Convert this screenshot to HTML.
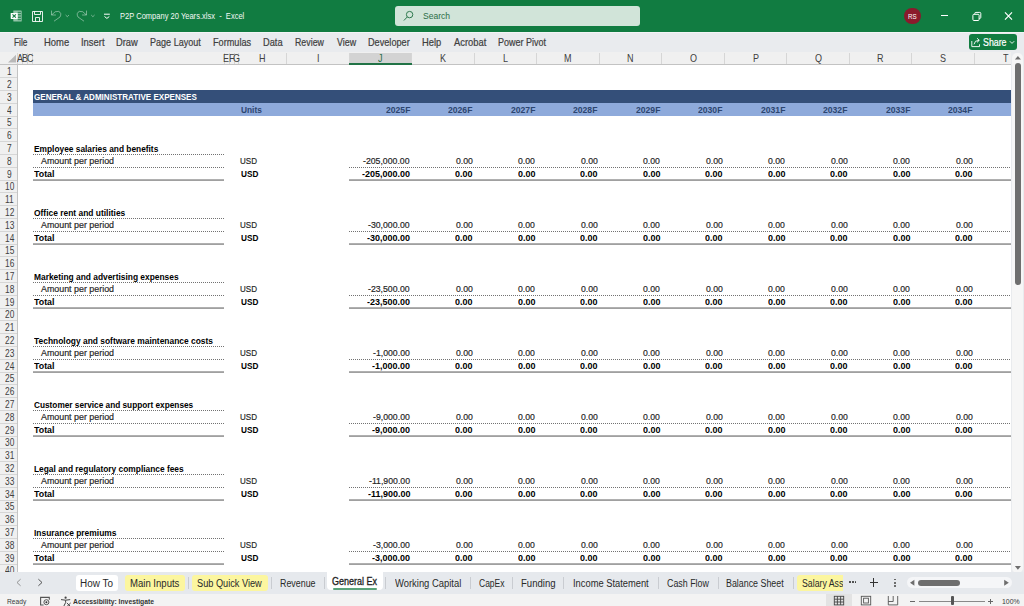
<!DOCTYPE html><html><head><meta charset="utf-8"><style>
html,body{margin:0;padding:0;width:1024px;height:606px;overflow:hidden;background:#fff;position:relative}
div,span,svg{position:absolute}
.t{white-space:nowrap;font-family:"Liberation Sans",sans-serif;transform-origin:0 0}
.k{-webkit-text-stroke:0.2px currentColor}
</style></head><body>
<div style="left:0.00px;top:0.00px;width:1024.00px;height:32.00px;background:#117c41"></div>
<svg style="left:10px;top:10px" width="13" height="13" viewBox="0 0 13 13">
<path d="M3.3 0.4 H11 Q11.7 0.4 11.7 1.1 V10.9 Q11.7 11.6 11 11.6 H4 Q3.3 11.6 3.3 10.9 Z" fill="rgba(255,255,255,0.55)"/>
<rect x="7.7" y="1.8" width="3.2" height="1.2" fill="#117c41" opacity="0.75"/>
<rect x="7.7" y="4.0" width="3.2" height="1.4" fill="#117c41" opacity="0.75"/>
<rect x="7.7" y="6.6" width="3.2" height="1.4" fill="#117c41" opacity="0.75"/>
<rect x="7.7" y="9.0" width="3.2" height="1.2" fill="#117c41" opacity="0.75"/>
<rect x="0.7" y="3" width="7" height="6" rx="0.4" fill="#fff"/>
<path d="M2.5 4.4 L5.9 7.6 M5.9 4.4 L2.5 7.6" stroke="#117c41" stroke-width="1.2"/>
</svg>
<svg style="left:31px;top:10px" width="14" height="13" viewBox="0 0 14 13" fill="none" stroke="rgba(255,255,255,0.88)" stroke-width="1">
<path d="M1.5 1.5 H11.5 V11.5 H1.5 Z"/>
<path d="M3.5 1.5 V4.5 H9.5 V1.5"/>
<path d="M4.5 11.5 V7.5 H8.5 V11.5"/>
</svg>
<svg style="left:50px;top:9px" width="48" height="14" viewBox="0 0 48 14" fill="none" stroke="rgba(255,255,255,0.42)" stroke-width="1">
<path d="M1.5 1.6 V6 H5.9"/><path d="M1.8 5.8 Q5.2 1.4 8.6 2.4 Q12.2 4 10 8 L4 12.2"/>
<path d="M15.6 6 L17.3 7.7 L19 6"/>
<path d="M36.5 1.6 V6 H32.1"/><path d="M36.2 5.8 Q32.8 1.4 29.4 2.4 Q25.8 4 28 8 L34 12.2"/>
<path d="M41.2 6 L42.9 7.7 L44.6 6"/>
</svg>
<svg style="left:103px;top:13px" width="8" height="7" viewBox="0 0 8 7" fill="none" stroke="#fff" stroke-width="1">
<path d="M1 1.2 H6.8"/><path d="M1.5 3.5 L3.9 5.4 L6.3 3.5"/>
</svg>
<span class="t" style="left:119.70px;top:11.00px;font-size:9.5px;line-height:9.5px;font-weight:normal;color:#f4f8f5;transform:scale(0.7934,1.000);white-space:pre">P2P Company 20 Years.xlsx  -  Excel</span>
<div style="left:395.20px;top:5.50px;width:245.00px;height:20.70px;background:#d1e4d9;border-radius:3px"></div>
<svg style="left:402px;top:10px" width="14" height="12" viewBox="0 0 14 12" fill="none" stroke="#2f7a4f" stroke-width="1">
<circle cx="7.6" cy="4.6" r="3.2"/><path d="M5.3 6.9 L1.9 10.5"/>
</svg>
<span class="t" style="left:422.52px;top:11.00px;font-size:9.5px;line-height:9.5px;font-weight:normal;color:#2b6e48;transform:scale(0.8993,1.000);">Search</span>
<div style="left:904.4px;top:8.1px;width:16.2px;height:16.2px;border-radius:50%;background:#8a1a2c"></div>
<span class="t" style="left:908.10px;top:13.00px;font-size:7px;line-height:7px;font-weight:normal;color:#fff;transform:scale(0.8844,1.000);">RS</span>
<div style="left:940.80px;top:15.00px;width:7.20px;height:1.00px;background:#fff"></div>
<svg style="left:970px;top:10px" width="14" height="13" viewBox="0 0 14 13" fill="none" stroke="#fff" stroke-width="1">
<rect x="2.9" y="4.3" width="6.2" height="6.2" rx="1"/><path d="M4.8 4.2 V3.4 Q4.8 2.4 5.8 2.4 H9.8 Q10.8 2.4 10.8 3.4 V7.4 Q10.8 8.4 9.8 8.4 H9.1"/>
</svg>
<svg style="left:1003px;top:10px" width="11" height="12" viewBox="0 0 11 12" fill="none" stroke="#fff" stroke-width="1.2">
<path d="M2 2.4 L9 9.6 M9 2.4 L2 9.6"/>
</svg>
<div style="left:0.00px;top:32.00px;width:1024.00px;height:20.00px;background:#e9ebee"></div>
<div style="left:0.00px;top:31.70px;width:1024.00px;height:1.30px;background:#f3f4f6"></div>
<span class="t k" style="left:14.24px;top:37.20px;font-size:9.75px;line-height:9.75px;font-weight:normal;color:#3f3f3f;transform:scale(0.8495,1.100);">File</span>
<span class="t k" style="left:44.24px;top:37.20px;font-size:9.75px;line-height:9.75px;font-weight:normal;color:#3f3f3f;transform:scale(0.9691,1.100);">Home</span>
<span class="t k" style="left:81.15px;top:37.20px;font-size:9.75px;line-height:9.75px;font-weight:normal;color:#3f3f3f;transform:scale(0.9638,1.100);">Insert</span>
<span class="t k" style="left:116.25px;top:37.20px;font-size:9.75px;line-height:9.75px;font-weight:normal;color:#3f3f3f;transform:scale(0.9551,1.100);">Draw</span>
<span class="t k" style="left:150.28px;top:37.20px;font-size:9.75px;line-height:9.75px;font-weight:normal;color:#3f3f3f;transform:scale(0.9273,1.100);">Page Layout</span>
<span class="t k" style="left:212.97px;top:37.20px;font-size:9.75px;line-height:9.75px;font-weight:normal;color:#3f3f3f;transform:scale(0.9384,1.100);">Formulas</span>
<span class="t k" style="left:262.86px;top:37.20px;font-size:9.75px;line-height:9.75px;font-weight:normal;color:#3f3f3f;transform:scale(0.9499,1.100);">Data</span>
<span class="t k" style="left:294.69px;top:37.20px;font-size:9.75px;line-height:9.75px;font-weight:normal;color:#3f3f3f;transform:scale(0.9038,1.100);">Review</span>
<span class="t k" style="left:336.86px;top:37.20px;font-size:9.75px;line-height:9.75px;font-weight:normal;color:#3f3f3f;transform:scale(0.9133,1.100);">View</span>
<span class="t k" style="left:367.97px;top:37.20px;font-size:9.75px;line-height:9.75px;font-weight:normal;color:#3f3f3f;transform:scale(0.9383,1.100);">Developer</span>
<span class="t k" style="left:421.85px;top:37.20px;font-size:9.75px;line-height:9.75px;font-weight:normal;color:#3f3f3f;transform:scale(0.9594,1.100);">Help</span>
<span class="t k" style="left:453.80px;top:37.20px;font-size:9.75px;line-height:9.75px;font-weight:normal;color:#3f3f3f;transform:scale(0.9630,1.100);">Acrobat</span>
<span class="t k" style="left:498.18px;top:37.20px;font-size:9.75px;line-height:9.75px;font-weight:normal;color:#3f3f3f;transform:scale(0.9221,1.100);">Power Pivot</span>
<div style="left:969.00px;top:34.10px;width:47.50px;height:15.90px;background:#117c41;border-radius:3px"></div>
<svg style="left:970px;top:36px" width="12" height="12" viewBox="0 0 12 12" fill="none" stroke="#fff" stroke-width="0.9">
<path d="M1.8 5 V10.6 H9.5 V8.3"/><path d="M4 8.3 Q4.5 4.3 9 4.3 M7 2.2 L9.3 4.3 L7 6.4"/>
</svg>
<span class="t k" style="left:982.50px;top:38.00px;font-size:10px;line-height:10px;font-weight:normal;color:#fff;transform:scale(0.8816,1.000);">Share</span>
<svg style="left:1009px;top:40px" width="6" height="5" viewBox="0 0 6 5" fill="none" stroke="#fff" stroke-width="0.9">
<path d="M0.8 1.2 L3 3.4 L5.2 1.2"/>
</svg>
<div style="left:0.00px;top:52.00px;width:1011.00px;height:12.00px;background:#f0f0f0"></div>
<div style="left:0.00px;top:64.00px;width:17.50px;height:508.20px;background:#f0f0f0"></div>
<svg style="left:7px;top:54px" width="10" height="9" viewBox="0 0 10 9"><path d="M9 0.7 V8.6 H1 Z" fill="#b9b9b9"/></svg>
<div style="left:349.20px;top:52.50px;width:62.53px;height:11.50px;background:#d3d3d3"></div>
<div style="left:17.00px;top:53.00px;width:1.00px;height:11.00px;background:#d6d6d6"></div>
<div style="left:22.00px;top:53.00px;width:1.00px;height:11.00px;background:#d6d6d6"></div>
<div style="left:27.00px;top:53.00px;width:1.00px;height:11.00px;background:#d6d6d6"></div>
<div style="left:32.00px;top:53.00px;width:1.00px;height:11.00px;background:#d6d6d6"></div>
<div style="left:223.80px;top:53.00px;width:1.00px;height:11.00px;background:#d6d6d6"></div>
<div style="left:228.50px;top:53.00px;width:1.00px;height:11.00px;background:#d6d6d6"></div>
<div style="left:233.50px;top:53.00px;width:1.00px;height:11.00px;background:#d6d6d6"></div>
<div style="left:238.00px;top:53.00px;width:1.00px;height:11.00px;background:#d6d6d6"></div>
<div style="left:286.00px;top:53.00px;width:1.00px;height:11.00px;background:#d6d6d6"></div>
<div style="left:348.70px;top:53.00px;width:1.00px;height:11.00px;background:#d6d6d6"></div>
<div style="left:411.23px;top:53.00px;width:1.00px;height:11.00px;background:#d6d6d6"></div>
<div style="left:473.76px;top:53.00px;width:1.00px;height:11.00px;background:#d6d6d6"></div>
<div style="left:536.29px;top:53.00px;width:1.00px;height:11.00px;background:#d6d6d6"></div>
<div style="left:598.82px;top:53.00px;width:1.00px;height:11.00px;background:#d6d6d6"></div>
<div style="left:661.35px;top:53.00px;width:1.00px;height:11.00px;background:#d6d6d6"></div>
<div style="left:723.88px;top:53.00px;width:1.00px;height:11.00px;background:#d6d6d6"></div>
<div style="left:786.41px;top:53.00px;width:1.00px;height:11.00px;background:#d6d6d6"></div>
<div style="left:848.94px;top:53.00px;width:1.00px;height:11.00px;background:#d6d6d6"></div>
<div style="left:911.47px;top:53.00px;width:1.00px;height:11.00px;background:#d6d6d6"></div>
<div style="left:974.00px;top:53.00px;width:1.00px;height:11.00px;background:#d6d6d6"></div>
<div style="left:0.00px;top:64.00px;width:1011.00px;height:1.00px;background:#c3c3c3"></div>
<div style="left:349.20px;top:63.00px;width:62.53px;height:2.00px;background:#217346"></div>
<span class="t" style="left:17.00px;top:53.36px;font-size:9.5px;line-height:9.5px;font-weight:normal;color:#404040;transform:scale(0.9500,1.080);">A</span>
<span class="t" style="left:21.86px;top:53.36px;font-size:9.5px;line-height:9.5px;font-weight:normal;color:#404040;transform:scale(0.9500,1.080);">B</span>
<span class="t" style="left:26.68px;top:53.36px;font-size:9.5px;line-height:9.5px;font-weight:normal;color:#404040;transform:scale(0.9500,1.080);">C</span>
<span class="t" style="left:124.99px;top:53.36px;font-size:9.5px;line-height:9.5px;font-weight:normal;color:#404040;transform:scale(0.9500,1.080);">D</span>
<span class="t" style="left:223.47px;top:53.36px;font-size:9.5px;line-height:9.5px;font-weight:normal;color:#404040;transform:scale(0.9500,1.080);">E</span>
<span class="t" style="left:228.57px;top:53.36px;font-size:9.5px;line-height:9.5px;font-weight:normal;color:#404040;transform:scale(0.9500,1.080);">F</span>
<span class="t" style="left:232.84px;top:53.36px;font-size:9.5px;line-height:9.5px;font-weight:normal;color:#404040;transform:scale(0.9500,1.080);">G</span>
<span class="t" style="left:259.25px;top:53.36px;font-size:9.5px;line-height:9.5px;font-weight:normal;color:#404040;transform:scale(0.9500,1.080);">H</span>
<span class="t" style="left:316.61px;top:53.36px;font-size:9.5px;line-height:9.5px;font-weight:normal;color:#404040;transform:scale(0.9500,1.080);">I</span>
<span class="t" style="left:378.48px;top:53.36px;font-size:9.5px;line-height:9.5px;font-weight:normal;color:#2a6e48;transform:scale(0.9500,1.080);">J</span>
<span class="t" style="left:439.68px;top:53.36px;font-size:9.5px;line-height:9.5px;font-weight:normal;color:#404040;transform:scale(0.9500,1.080);">K</span>
<span class="t" style="left:502.79px;top:53.36px;font-size:9.5px;line-height:9.5px;font-weight:normal;color:#404040;transform:scale(0.9500,1.080);">L</span>
<span class="t" style="left:564.31px;top:53.36px;font-size:9.5px;line-height:9.5px;font-weight:normal;color:#404040;transform:scale(0.9500,1.080);">M</span>
<span class="t" style="left:627.34px;top:53.36px;font-size:9.5px;line-height:9.5px;font-weight:normal;color:#404040;transform:scale(0.9500,1.080);">N</span>
<span class="t" style="left:689.62px;top:53.36px;font-size:9.5px;line-height:9.5px;font-weight:normal;color:#404040;transform:scale(0.9500,1.080);">O</span>
<span class="t" style="left:752.51px;top:53.36px;font-size:9.5px;line-height:9.5px;font-weight:normal;color:#404040;transform:scale(0.9500,1.080);">P</span>
<span class="t" style="left:814.68px;top:53.36px;font-size:9.5px;line-height:9.5px;font-weight:normal;color:#404040;transform:scale(0.9500,1.080);">Q</span>
<span class="t" style="left:877.30px;top:53.36px;font-size:9.5px;line-height:9.5px;font-weight:normal;color:#404040;transform:scale(0.9500,1.080);">R</span>
<span class="t" style="left:940.23px;top:53.36px;font-size:9.5px;line-height:9.5px;font-weight:normal;color:#404040;transform:scale(0.9500,1.080);">S</span>
<span class="t" style="left:1003.01px;top:53.36px;font-size:9.5px;line-height:9.5px;font-weight:normal;color:#404040;transform:scale(0.9500,1.080);">T</span>
<div style="left:17.00px;top:64.00px;width:1.00px;height:508.20px;background:#c3c3c3"></div>
<span class="t" style="left:6.95px;top:66.36px;font-size:9.5px;line-height:9.5px;font-weight:normal;color:#404040;transform:scale(0.8800,1.080);">1</span>
<div style="left:0.00px;top:77.00px;width:17.00px;height:1.00px;background:#d6d6d6"></div>
<span class="t" style="left:7.08px;top:79.36px;font-size:9.5px;line-height:9.5px;font-weight:normal;color:#404040;transform:scale(0.8800,1.080);">2</span>
<div style="left:0.00px;top:90.00px;width:17.00px;height:1.00px;background:#d6d6d6"></div>
<span class="t" style="left:7.08px;top:92.36px;font-size:9.5px;line-height:9.5px;font-weight:normal;color:#404040;transform:scale(0.8800,1.080);">3</span>
<div style="left:0.00px;top:103.00px;width:17.00px;height:1.00px;background:#d6d6d6"></div>
<span class="t" style="left:7.12px;top:105.36px;font-size:9.5px;line-height:9.5px;font-weight:normal;color:#404040;transform:scale(0.8800,1.080);">4</span>
<div style="left:0.00px;top:116.00px;width:17.00px;height:1.00px;background:#d6d6d6"></div>
<span class="t" style="left:7.08px;top:117.36px;font-size:9.5px;line-height:9.5px;font-weight:normal;color:#404040;transform:scale(0.8800,1.080);">5</span>
<div style="left:0.00px;top:128.00px;width:17.00px;height:1.00px;background:#d6d6d6"></div>
<span class="t" style="left:7.04px;top:130.36px;font-size:9.5px;line-height:9.5px;font-weight:normal;color:#404040;transform:scale(0.8800,1.080);">6</span>
<div style="left:0.00px;top:141.00px;width:17.00px;height:1.00px;background:#d6d6d6"></div>
<span class="t" style="left:7.08px;top:143.36px;font-size:9.5px;line-height:9.5px;font-weight:normal;color:#404040;transform:scale(0.8800,1.080);">7</span>
<div style="left:0.00px;top:154.00px;width:17.00px;height:1.00px;background:#d6d6d6"></div>
<span class="t" style="left:7.06px;top:156.36px;font-size:9.5px;line-height:9.5px;font-weight:normal;color:#404040;transform:scale(0.8800,1.080);">8</span>
<div style="left:0.00px;top:167.00px;width:17.00px;height:1.00px;background:#d6d6d6"></div>
<span class="t" style="left:7.08px;top:169.36px;font-size:9.5px;line-height:9.5px;font-weight:normal;color:#404040;transform:scale(0.8800,1.080);">9</span>
<div style="left:0.00px;top:180.00px;width:17.00px;height:1.00px;background:#d6d6d6"></div>
<span class="t" style="left:4.59px;top:181.36px;font-size:9.5px;line-height:9.5px;font-weight:normal;color:#404040;transform:scale(0.8800,1.080);">10</span>
<div style="left:0.00px;top:192.00px;width:17.00px;height:1.00px;background:#d6d6d6"></div>
<span class="t" style="left:4.95px;top:194.36px;font-size:9.5px;line-height:9.5px;font-weight:normal;color:#404040;transform:scale(0.8800,1.080);">11</span>
<div style="left:0.00px;top:205.00px;width:17.00px;height:1.00px;background:#d6d6d6"></div>
<span class="t" style="left:4.66px;top:207.36px;font-size:9.5px;line-height:9.5px;font-weight:normal;color:#404040;transform:scale(0.8800,1.080);">12</span>
<div style="left:0.00px;top:218.00px;width:17.00px;height:1.00px;background:#d6d6d6"></div>
<span class="t" style="left:4.61px;top:220.36px;font-size:9.5px;line-height:9.5px;font-weight:normal;color:#404040;transform:scale(0.8800,1.080);">13</span>
<div style="left:0.00px;top:231.00px;width:17.00px;height:1.00px;background:#d6d6d6"></div>
<span class="t" style="left:4.57px;top:233.36px;font-size:9.5px;line-height:9.5px;font-weight:normal;color:#404040;transform:scale(0.8800,1.080);">14</span>
<div style="left:0.00px;top:244.00px;width:17.00px;height:1.00px;background:#d6d6d6"></div>
<span class="t" style="left:4.61px;top:245.36px;font-size:9.5px;line-height:9.5px;font-weight:normal;color:#404040;transform:scale(0.8800,1.080);">15</span>
<div style="left:0.00px;top:256.00px;width:17.00px;height:1.00px;background:#d6d6d6"></div>
<span class="t" style="left:4.61px;top:258.36px;font-size:9.5px;line-height:9.5px;font-weight:normal;color:#404040;transform:scale(0.8800,1.080);">16</span>
<div style="left:0.00px;top:269.00px;width:17.00px;height:1.00px;background:#d6d6d6"></div>
<span class="t" style="left:4.66px;top:271.36px;font-size:9.5px;line-height:9.5px;font-weight:normal;color:#404040;transform:scale(0.8800,1.080);">17</span>
<div style="left:0.00px;top:282.00px;width:17.00px;height:1.00px;background:#d6d6d6"></div>
<span class="t" style="left:4.61px;top:284.36px;font-size:9.5px;line-height:9.5px;font-weight:normal;color:#404040;transform:scale(0.8800,1.080);">18</span>
<div style="left:0.00px;top:295.00px;width:17.00px;height:1.00px;background:#d6d6d6"></div>
<span class="t" style="left:4.63px;top:297.36px;font-size:9.5px;line-height:9.5px;font-weight:normal;color:#404040;transform:scale(0.8800,1.080);">19</span>
<div style="left:0.00px;top:308.00px;width:17.00px;height:1.00px;background:#d6d6d6"></div>
<span class="t" style="left:4.70px;top:309.36px;font-size:9.5px;line-height:9.5px;font-weight:normal;color:#404040;transform:scale(0.8800,1.080);">20</span>
<div style="left:0.00px;top:320.00px;width:17.00px;height:1.00px;background:#d6d6d6"></div>
<span class="t" style="left:4.74px;top:322.36px;font-size:9.5px;line-height:9.5px;font-weight:normal;color:#404040;transform:scale(0.8800,1.080);">21</span>
<div style="left:0.00px;top:333.00px;width:17.00px;height:1.00px;background:#d6d6d6"></div>
<span class="t" style="left:4.76px;top:335.36px;font-size:9.5px;line-height:9.5px;font-weight:normal;color:#404040;transform:scale(0.8800,1.080);">22</span>
<div style="left:0.00px;top:346.00px;width:17.00px;height:1.00px;background:#d6d6d6"></div>
<span class="t" style="left:4.72px;top:348.36px;font-size:9.5px;line-height:9.5px;font-weight:normal;color:#404040;transform:scale(0.8800,1.080);">23</span>
<div style="left:0.00px;top:359.00px;width:17.00px;height:1.00px;background:#d6d6d6"></div>
<span class="t" style="left:4.68px;top:361.36px;font-size:9.5px;line-height:9.5px;font-weight:normal;color:#404040;transform:scale(0.8800,1.080);">24</span>
<div style="left:0.00px;top:372.00px;width:17.00px;height:1.00px;background:#d6d6d6"></div>
<span class="t" style="left:4.72px;top:373.36px;font-size:9.5px;line-height:9.5px;font-weight:normal;color:#404040;transform:scale(0.8800,1.080);">25</span>
<div style="left:0.00px;top:384.00px;width:17.00px;height:1.00px;background:#d6d6d6"></div>
<span class="t" style="left:4.72px;top:386.36px;font-size:9.5px;line-height:9.5px;font-weight:normal;color:#404040;transform:scale(0.8800,1.080);">26</span>
<div style="left:0.00px;top:397.00px;width:17.00px;height:1.00px;background:#d6d6d6"></div>
<span class="t" style="left:4.76px;top:399.36px;font-size:9.5px;line-height:9.5px;font-weight:normal;color:#404040;transform:scale(0.8800,1.080);">27</span>
<div style="left:0.00px;top:410.00px;width:17.00px;height:1.00px;background:#d6d6d6"></div>
<span class="t" style="left:4.72px;top:412.36px;font-size:9.5px;line-height:9.5px;font-weight:normal;color:#404040;transform:scale(0.8800,1.080);">28</span>
<div style="left:0.00px;top:423.00px;width:17.00px;height:1.00px;background:#d6d6d6"></div>
<span class="t" style="left:4.74px;top:425.36px;font-size:9.5px;line-height:9.5px;font-weight:normal;color:#404040;transform:scale(0.8800,1.080);">29</span>
<div style="left:0.00px;top:436.00px;width:17.00px;height:1.00px;background:#d6d6d6"></div>
<span class="t" style="left:4.74px;top:437.36px;font-size:9.5px;line-height:9.5px;font-weight:normal;color:#404040;transform:scale(0.8800,1.080);">30</span>
<div style="left:0.00px;top:448.00px;width:17.00px;height:1.00px;background:#d6d6d6"></div>
<span class="t" style="left:4.78px;top:450.36px;font-size:9.5px;line-height:9.5px;font-weight:normal;color:#404040;transform:scale(0.8800,1.080);">31</span>
<div style="left:0.00px;top:461.00px;width:17.00px;height:1.00px;background:#d6d6d6"></div>
<span class="t" style="left:4.80px;top:463.36px;font-size:9.5px;line-height:9.5px;font-weight:normal;color:#404040;transform:scale(0.8800,1.080);">32</span>
<div style="left:0.00px;top:474.00px;width:17.00px;height:1.00px;background:#d6d6d6"></div>
<span class="t" style="left:4.76px;top:476.36px;font-size:9.5px;line-height:9.5px;font-weight:normal;color:#404040;transform:scale(0.8800,1.080);">33</span>
<div style="left:0.00px;top:487.00px;width:17.00px;height:1.00px;background:#d6d6d6"></div>
<span class="t" style="left:4.72px;top:489.36px;font-size:9.5px;line-height:9.5px;font-weight:normal;color:#404040;transform:scale(0.8800,1.080);">34</span>
<div style="left:0.00px;top:500.00px;width:17.00px;height:1.00px;background:#d6d6d6"></div>
<span class="t" style="left:4.76px;top:501.36px;font-size:9.5px;line-height:9.5px;font-weight:normal;color:#404040;transform:scale(0.8800,1.080);">35</span>
<div style="left:0.00px;top:512.00px;width:17.00px;height:1.00px;background:#d6d6d6"></div>
<span class="t" style="left:4.76px;top:514.36px;font-size:9.5px;line-height:9.5px;font-weight:normal;color:#404040;transform:scale(0.8800,1.080);">36</span>
<div style="left:0.00px;top:525.00px;width:17.00px;height:1.00px;background:#d6d6d6"></div>
<span class="t" style="left:4.80px;top:527.36px;font-size:9.5px;line-height:9.5px;font-weight:normal;color:#404040;transform:scale(0.8800,1.080);">37</span>
<div style="left:0.00px;top:538.00px;width:17.00px;height:1.00px;background:#d6d6d6"></div>
<span class="t" style="left:4.76px;top:540.36px;font-size:9.5px;line-height:9.5px;font-weight:normal;color:#404040;transform:scale(0.8800,1.080);">38</span>
<div style="left:0.00px;top:551.00px;width:17.00px;height:1.00px;background:#d6d6d6"></div>
<span class="t" style="left:4.78px;top:553.36px;font-size:9.5px;line-height:9.5px;font-weight:normal;color:#404040;transform:scale(0.8800,1.080);">39</span>
<div style="left:0.00px;top:564.00px;width:17.00px;height:1.00px;background:#d6d6d6"></div>
<span class="t" style="left:4.82px;top:565.36px;font-size:9.5px;line-height:9.5px;font-weight:normal;color:#404040;transform:scale(0.8800,1.080);">40</span>
<div style="left:32.50px;top:90.00px;width:978.30px;height:13.00px;background:#344f79"></div>
<div style="left:32.50px;top:103.00px;width:978.30px;height:13.00px;background:#8eaadb"></div>
<span class="t" style="left:34.28px;top:92.00px;font-size:9.5px;line-height:9.5px;font-weight:bold;color:#fff;transform:scale(0.8482,1.000);">GENERAL &amp; ADMINISTRATIVE EXPENSES</span>
<span class="t" style="left:240.50px;top:105.00px;font-size:9.5px;line-height:9.5px;font-weight:bold;color:#2c4570;transform:scale(0.8772,1.000);">Units</span>
<span class="t" style="left:385.70px;top:105.00px;font-size:9.5px;line-height:9.5px;font-weight:bold;color:#2c4570;transform:scale(0.9061,1.000);">2025F</span>
<span class="t" style="left:448.06px;top:105.00px;font-size:9.5px;line-height:9.5px;font-weight:bold;color:#2c4570;transform:scale(0.9061,1.000);">2026F</span>
<span class="t" style="left:510.59px;top:105.00px;font-size:9.5px;line-height:9.5px;font-weight:bold;color:#2c4570;transform:scale(0.9061,1.000);">2027F</span>
<span class="t" style="left:573.12px;top:105.00px;font-size:9.5px;line-height:9.5px;font-weight:bold;color:#2c4570;transform:scale(0.9061,1.000);">2028F</span>
<span class="t" style="left:635.65px;top:105.00px;font-size:9.5px;line-height:9.5px;font-weight:bold;color:#2c4570;transform:scale(0.9061,1.000);">2029F</span>
<span class="t" style="left:698.18px;top:105.00px;font-size:9.5px;line-height:9.5px;font-weight:bold;color:#2c4570;transform:scale(0.9061,1.000);">2030F</span>
<span class="t" style="left:760.71px;top:105.00px;font-size:9.5px;line-height:9.5px;font-weight:bold;color:#2c4570;transform:scale(0.9061,1.000);">2031F</span>
<span class="t" style="left:823.24px;top:105.00px;font-size:9.5px;line-height:9.5px;font-weight:bold;color:#2c4570;transform:scale(0.9061,1.000);">2032F</span>
<span class="t" style="left:885.77px;top:105.00px;font-size:9.5px;line-height:9.5px;font-weight:bold;color:#2c4570;transform:scale(0.9061,1.000);">2033F</span>
<span class="t" style="left:948.30px;top:105.00px;font-size:9.5px;line-height:9.5px;font-weight:bold;color:#2c4570;transform:scale(0.9061,1.000);">2034F</span>
<span class="t" style="left:33.86px;top:144.00px;font-size:9.5px;line-height:9.5px;font-weight:bold;color:#000;transform:scale(0.8783,1.000);">Employee salaries and benefits</span>
<div style="left:32.50px;top:154.00px;width:191.80px;height:1.00px;background:repeating-linear-gradient(90deg,#727272 0 1px,transparent 1px 2px)"></div>
<span class="t k" style="left:41.00px;top:156.00px;font-size:9.5px;line-height:9.5px;font-weight:normal;color:#262626;transform:scale(0.9340,1.000);">Amount per period</span>
<span class="t k" style="left:240.40px;top:156.00px;font-size:9.5px;line-height:9.5px;font-weight:normal;color:#262626;transform:scale(0.8463,1.000);">USD</span>
<span class="t k" style="left:363.44px;top:156.00px;font-size:9.5px;line-height:9.5px;font-weight:normal;color:#262626;transform:scale(0.9174,1.000);">-205,000.00</span>
<span class="t k" style="left:455.51px;top:156.00px;font-size:9.5px;line-height:9.5px;font-weight:normal;color:#262626;transform:scale(0.9174,1.000);">0.00</span>
<span class="t k" style="left:518.04px;top:156.00px;font-size:9.5px;line-height:9.5px;font-weight:normal;color:#262626;transform:scale(0.9174,1.000);">0.00</span>
<span class="t k" style="left:580.57px;top:156.00px;font-size:9.5px;line-height:9.5px;font-weight:normal;color:#262626;transform:scale(0.9174,1.000);">0.00</span>
<span class="t k" style="left:643.10px;top:156.00px;font-size:9.5px;line-height:9.5px;font-weight:normal;color:#262626;transform:scale(0.9174,1.000);">0.00</span>
<span class="t k" style="left:705.63px;top:156.00px;font-size:9.5px;line-height:9.5px;font-weight:normal;color:#262626;transform:scale(0.9174,1.000);">0.00</span>
<span class="t k" style="left:768.16px;top:156.00px;font-size:9.5px;line-height:9.5px;font-weight:normal;color:#262626;transform:scale(0.9174,1.000);">0.00</span>
<span class="t k" style="left:830.69px;top:156.00px;font-size:9.5px;line-height:9.5px;font-weight:normal;color:#262626;transform:scale(0.9174,1.000);">0.00</span>
<span class="t k" style="left:893.22px;top:156.00px;font-size:9.5px;line-height:9.5px;font-weight:normal;color:#262626;transform:scale(0.9174,1.000);">0.00</span>
<span class="t k" style="left:955.75px;top:156.00px;font-size:9.5px;line-height:9.5px;font-weight:normal;color:#262626;transform:scale(0.9174,1.000);">0.00</span>
<div style="left:32.50px;top:167.00px;width:191.80px;height:1.00px;background:repeating-linear-gradient(90deg,#727272 0 1px,transparent 1px 2px)"></div>
<div style="left:349.20px;top:167.00px;width:661.60px;height:1.00px;background:repeating-linear-gradient(90deg,#727272 0 1px,transparent 1px 2px)"></div>
<span class="t" style="left:34.21px;top:169.00px;font-size:9.5px;line-height:9.5px;font-weight:bold;color:#000;transform:scale(0.9325,1.000);">Total</span>
<span class="t" style="left:240.51px;top:169.00px;font-size:9.5px;line-height:9.5px;font-weight:bold;color:#000;transform:scale(0.8641,1.000);">USD</span>
<span class="t" style="left:362.07px;top:169.00px;font-size:9.5px;line-height:9.5px;font-weight:bold;color:#000;transform:scale(0.9455,1.000);">-205,000.00</span>
<span class="t" style="left:455.05px;top:169.00px;font-size:9.5px;line-height:9.5px;font-weight:bold;color:#000;transform:scale(0.9455,1.000);">0.00</span>
<span class="t" style="left:517.58px;top:169.00px;font-size:9.5px;line-height:9.5px;font-weight:bold;color:#000;transform:scale(0.9455,1.000);">0.00</span>
<span class="t" style="left:580.11px;top:169.00px;font-size:9.5px;line-height:9.5px;font-weight:bold;color:#000;transform:scale(0.9455,1.000);">0.00</span>
<span class="t" style="left:642.64px;top:169.00px;font-size:9.5px;line-height:9.5px;font-weight:bold;color:#000;transform:scale(0.9455,1.000);">0.00</span>
<span class="t" style="left:705.17px;top:169.00px;font-size:9.5px;line-height:9.5px;font-weight:bold;color:#000;transform:scale(0.9455,1.000);">0.00</span>
<span class="t" style="left:767.70px;top:169.00px;font-size:9.5px;line-height:9.5px;font-weight:bold;color:#000;transform:scale(0.9455,1.000);">0.00</span>
<span class="t" style="left:830.23px;top:169.00px;font-size:9.5px;line-height:9.5px;font-weight:bold;color:#000;transform:scale(0.9455,1.000);">0.00</span>
<span class="t" style="left:892.76px;top:169.00px;font-size:9.5px;line-height:9.5px;font-weight:bold;color:#000;transform:scale(0.9455,1.000);">0.00</span>
<span class="t" style="left:955.29px;top:169.00px;font-size:9.5px;line-height:9.5px;font-weight:bold;color:#000;transform:scale(0.9455,1.000);">0.00</span>
<div style="left:32.50px;top:179.00px;width:191.80px;height:2.00px;background:linear-gradient(#b0b0b0 0 50%,#a0a0a0 50% 100%)"></div>
<div style="left:349.20px;top:179.00px;width:661.60px;height:2.00px;background:linear-gradient(#b0b0b0 0 50%,#a0a0a0 50% 100%)"></div>
<span class="t" style="left:34.06px;top:208.00px;font-size:9.5px;line-height:9.5px;font-weight:bold;color:#000;transform:scale(0.8867,1.000);">Office rent and utilities</span>
<div style="left:32.50px;top:218.00px;width:191.80px;height:1.00px;background:repeating-linear-gradient(90deg,#727272 0 1px,transparent 1px 2px)"></div>
<span class="t k" style="left:41.00px;top:220.00px;font-size:9.5px;line-height:9.5px;font-weight:normal;color:#262626;transform:scale(0.9340,1.000);">Amount per period</span>
<span class="t k" style="left:240.40px;top:220.00px;font-size:9.5px;line-height:9.5px;font-weight:normal;color:#262626;transform:scale(0.8463,1.000);">USD</span>
<span class="t k" style="left:368.27px;top:220.00px;font-size:9.5px;line-height:9.5px;font-weight:normal;color:#262626;transform:scale(0.9174,1.000);">-30,000.00</span>
<span class="t k" style="left:455.51px;top:220.00px;font-size:9.5px;line-height:9.5px;font-weight:normal;color:#262626;transform:scale(0.9174,1.000);">0.00</span>
<span class="t k" style="left:518.04px;top:220.00px;font-size:9.5px;line-height:9.5px;font-weight:normal;color:#262626;transform:scale(0.9174,1.000);">0.00</span>
<span class="t k" style="left:580.57px;top:220.00px;font-size:9.5px;line-height:9.5px;font-weight:normal;color:#262626;transform:scale(0.9174,1.000);">0.00</span>
<span class="t k" style="left:643.10px;top:220.00px;font-size:9.5px;line-height:9.5px;font-weight:normal;color:#262626;transform:scale(0.9174,1.000);">0.00</span>
<span class="t k" style="left:705.63px;top:220.00px;font-size:9.5px;line-height:9.5px;font-weight:normal;color:#262626;transform:scale(0.9174,1.000);">0.00</span>
<span class="t k" style="left:768.16px;top:220.00px;font-size:9.5px;line-height:9.5px;font-weight:normal;color:#262626;transform:scale(0.9174,1.000);">0.00</span>
<span class="t k" style="left:830.69px;top:220.00px;font-size:9.5px;line-height:9.5px;font-weight:normal;color:#262626;transform:scale(0.9174,1.000);">0.00</span>
<span class="t k" style="left:893.22px;top:220.00px;font-size:9.5px;line-height:9.5px;font-weight:normal;color:#262626;transform:scale(0.9174,1.000);">0.00</span>
<span class="t k" style="left:955.75px;top:220.00px;font-size:9.5px;line-height:9.5px;font-weight:normal;color:#262626;transform:scale(0.9174,1.000);">0.00</span>
<div style="left:32.50px;top:231.00px;width:191.80px;height:1.00px;background:repeating-linear-gradient(90deg,#727272 0 1px,transparent 1px 2px)"></div>
<div style="left:349.20px;top:231.00px;width:661.60px;height:1.00px;background:repeating-linear-gradient(90deg,#727272 0 1px,transparent 1px 2px)"></div>
<span class="t" style="left:34.21px;top:233.00px;font-size:9.5px;line-height:9.5px;font-weight:bold;color:#000;transform:scale(0.9325,1.000);">Total</span>
<span class="t" style="left:240.51px;top:233.00px;font-size:9.5px;line-height:9.5px;font-weight:bold;color:#000;transform:scale(0.8641,1.000);">USD</span>
<span class="t" style="left:367.06px;top:233.00px;font-size:9.5px;line-height:9.5px;font-weight:bold;color:#000;transform:scale(0.9455,1.000);">-30,000.00</span>
<span class="t" style="left:455.05px;top:233.00px;font-size:9.5px;line-height:9.5px;font-weight:bold;color:#000;transform:scale(0.9455,1.000);">0.00</span>
<span class="t" style="left:517.58px;top:233.00px;font-size:9.5px;line-height:9.5px;font-weight:bold;color:#000;transform:scale(0.9455,1.000);">0.00</span>
<span class="t" style="left:580.11px;top:233.00px;font-size:9.5px;line-height:9.5px;font-weight:bold;color:#000;transform:scale(0.9455,1.000);">0.00</span>
<span class="t" style="left:642.64px;top:233.00px;font-size:9.5px;line-height:9.5px;font-weight:bold;color:#000;transform:scale(0.9455,1.000);">0.00</span>
<span class="t" style="left:705.17px;top:233.00px;font-size:9.5px;line-height:9.5px;font-weight:bold;color:#000;transform:scale(0.9455,1.000);">0.00</span>
<span class="t" style="left:767.70px;top:233.00px;font-size:9.5px;line-height:9.5px;font-weight:bold;color:#000;transform:scale(0.9455,1.000);">0.00</span>
<span class="t" style="left:830.23px;top:233.00px;font-size:9.5px;line-height:9.5px;font-weight:bold;color:#000;transform:scale(0.9455,1.000);">0.00</span>
<span class="t" style="left:892.76px;top:233.00px;font-size:9.5px;line-height:9.5px;font-weight:bold;color:#000;transform:scale(0.9455,1.000);">0.00</span>
<span class="t" style="left:955.29px;top:233.00px;font-size:9.5px;line-height:9.5px;font-weight:bold;color:#000;transform:scale(0.9455,1.000);">0.00</span>
<div style="left:32.50px;top:243.00px;width:191.80px;height:2.00px;background:linear-gradient(#b0b0b0 0 50%,#a0a0a0 50% 100%)"></div>
<div style="left:349.20px;top:243.00px;width:661.60px;height:2.00px;background:linear-gradient(#b0b0b0 0 50%,#a0a0a0 50% 100%)"></div>
<span class="t" style="left:33.85px;top:272.00px;font-size:9.5px;line-height:9.5px;font-weight:bold;color:#000;transform:scale(0.8835,1.000);">Marketing and advertising expenses</span>
<div style="left:32.50px;top:282.00px;width:191.80px;height:1.00px;background:repeating-linear-gradient(90deg,#727272 0 1px,transparent 1px 2px)"></div>
<span class="t k" style="left:41.00px;top:284.00px;font-size:9.5px;line-height:9.5px;font-weight:normal;color:#262626;transform:scale(0.9340,1.000);">Amount per period</span>
<span class="t k" style="left:240.40px;top:284.00px;font-size:9.5px;line-height:9.5px;font-weight:normal;color:#262626;transform:scale(0.8463,1.000);">USD</span>
<span class="t k" style="left:368.27px;top:284.00px;font-size:9.5px;line-height:9.5px;font-weight:normal;color:#262626;transform:scale(0.9174,1.000);">-23,500.00</span>
<span class="t k" style="left:455.51px;top:284.00px;font-size:9.5px;line-height:9.5px;font-weight:normal;color:#262626;transform:scale(0.9174,1.000);">0.00</span>
<span class="t k" style="left:518.04px;top:284.00px;font-size:9.5px;line-height:9.5px;font-weight:normal;color:#262626;transform:scale(0.9174,1.000);">0.00</span>
<span class="t k" style="left:580.57px;top:284.00px;font-size:9.5px;line-height:9.5px;font-weight:normal;color:#262626;transform:scale(0.9174,1.000);">0.00</span>
<span class="t k" style="left:643.10px;top:284.00px;font-size:9.5px;line-height:9.5px;font-weight:normal;color:#262626;transform:scale(0.9174,1.000);">0.00</span>
<span class="t k" style="left:705.63px;top:284.00px;font-size:9.5px;line-height:9.5px;font-weight:normal;color:#262626;transform:scale(0.9174,1.000);">0.00</span>
<span class="t k" style="left:768.16px;top:284.00px;font-size:9.5px;line-height:9.5px;font-weight:normal;color:#262626;transform:scale(0.9174,1.000);">0.00</span>
<span class="t k" style="left:830.69px;top:284.00px;font-size:9.5px;line-height:9.5px;font-weight:normal;color:#262626;transform:scale(0.9174,1.000);">0.00</span>
<span class="t k" style="left:893.22px;top:284.00px;font-size:9.5px;line-height:9.5px;font-weight:normal;color:#262626;transform:scale(0.9174,1.000);">0.00</span>
<span class="t k" style="left:955.75px;top:284.00px;font-size:9.5px;line-height:9.5px;font-weight:normal;color:#262626;transform:scale(0.9174,1.000);">0.00</span>
<div style="left:32.50px;top:295.00px;width:191.80px;height:1.00px;background:repeating-linear-gradient(90deg,#727272 0 1px,transparent 1px 2px)"></div>
<div style="left:349.20px;top:295.00px;width:661.60px;height:1.00px;background:repeating-linear-gradient(90deg,#727272 0 1px,transparent 1px 2px)"></div>
<span class="t" style="left:34.21px;top:297.00px;font-size:9.5px;line-height:9.5px;font-weight:bold;color:#000;transform:scale(0.9325,1.000);">Total</span>
<span class="t" style="left:240.51px;top:297.00px;font-size:9.5px;line-height:9.5px;font-weight:bold;color:#000;transform:scale(0.8641,1.000);">USD</span>
<span class="t" style="left:367.06px;top:297.00px;font-size:9.5px;line-height:9.5px;font-weight:bold;color:#000;transform:scale(0.9455,1.000);">-23,500.00</span>
<span class="t" style="left:455.05px;top:297.00px;font-size:9.5px;line-height:9.5px;font-weight:bold;color:#000;transform:scale(0.9455,1.000);">0.00</span>
<span class="t" style="left:517.58px;top:297.00px;font-size:9.5px;line-height:9.5px;font-weight:bold;color:#000;transform:scale(0.9455,1.000);">0.00</span>
<span class="t" style="left:580.11px;top:297.00px;font-size:9.5px;line-height:9.5px;font-weight:bold;color:#000;transform:scale(0.9455,1.000);">0.00</span>
<span class="t" style="left:642.64px;top:297.00px;font-size:9.5px;line-height:9.5px;font-weight:bold;color:#000;transform:scale(0.9455,1.000);">0.00</span>
<span class="t" style="left:705.17px;top:297.00px;font-size:9.5px;line-height:9.5px;font-weight:bold;color:#000;transform:scale(0.9455,1.000);">0.00</span>
<span class="t" style="left:767.70px;top:297.00px;font-size:9.5px;line-height:9.5px;font-weight:bold;color:#000;transform:scale(0.9455,1.000);">0.00</span>
<span class="t" style="left:830.23px;top:297.00px;font-size:9.5px;line-height:9.5px;font-weight:bold;color:#000;transform:scale(0.9455,1.000);">0.00</span>
<span class="t" style="left:892.76px;top:297.00px;font-size:9.5px;line-height:9.5px;font-weight:bold;color:#000;transform:scale(0.9455,1.000);">0.00</span>
<span class="t" style="left:955.29px;top:297.00px;font-size:9.5px;line-height:9.5px;font-weight:bold;color:#000;transform:scale(0.9455,1.000);">0.00</span>
<div style="left:32.50px;top:307.00px;width:191.80px;height:2.00px;background:linear-gradient(#b0b0b0 0 50%,#a0a0a0 50% 100%)"></div>
<div style="left:349.20px;top:307.00px;width:661.60px;height:2.00px;background:linear-gradient(#b0b0b0 0 50%,#a0a0a0 50% 100%)"></div>
<span class="t" style="left:34.32px;top:336.00px;font-size:9.5px;line-height:9.5px;font-weight:bold;color:#000;transform:scale(0.8862,1.000);">Technology and software maintenance costs</span>
<div style="left:32.50px;top:346.00px;width:191.80px;height:1.00px;background:repeating-linear-gradient(90deg,#727272 0 1px,transparent 1px 2px)"></div>
<span class="t k" style="left:41.00px;top:348.00px;font-size:9.5px;line-height:9.5px;font-weight:normal;color:#262626;transform:scale(0.9340,1.000);">Amount per period</span>
<span class="t k" style="left:240.40px;top:348.00px;font-size:9.5px;line-height:9.5px;font-weight:normal;color:#262626;transform:scale(0.8463,1.000);">USD</span>
<span class="t k" style="left:373.11px;top:348.00px;font-size:9.5px;line-height:9.5px;font-weight:normal;color:#262626;transform:scale(0.9174,1.000);">-1,000.00</span>
<span class="t k" style="left:455.51px;top:348.00px;font-size:9.5px;line-height:9.5px;font-weight:normal;color:#262626;transform:scale(0.9174,1.000);">0.00</span>
<span class="t k" style="left:518.04px;top:348.00px;font-size:9.5px;line-height:9.5px;font-weight:normal;color:#262626;transform:scale(0.9174,1.000);">0.00</span>
<span class="t k" style="left:580.57px;top:348.00px;font-size:9.5px;line-height:9.5px;font-weight:normal;color:#262626;transform:scale(0.9174,1.000);">0.00</span>
<span class="t k" style="left:643.10px;top:348.00px;font-size:9.5px;line-height:9.5px;font-weight:normal;color:#262626;transform:scale(0.9174,1.000);">0.00</span>
<span class="t k" style="left:705.63px;top:348.00px;font-size:9.5px;line-height:9.5px;font-weight:normal;color:#262626;transform:scale(0.9174,1.000);">0.00</span>
<span class="t k" style="left:768.16px;top:348.00px;font-size:9.5px;line-height:9.5px;font-weight:normal;color:#262626;transform:scale(0.9174,1.000);">0.00</span>
<span class="t k" style="left:830.69px;top:348.00px;font-size:9.5px;line-height:9.5px;font-weight:normal;color:#262626;transform:scale(0.9174,1.000);">0.00</span>
<span class="t k" style="left:893.22px;top:348.00px;font-size:9.5px;line-height:9.5px;font-weight:normal;color:#262626;transform:scale(0.9174,1.000);">0.00</span>
<span class="t k" style="left:955.75px;top:348.00px;font-size:9.5px;line-height:9.5px;font-weight:normal;color:#262626;transform:scale(0.9174,1.000);">0.00</span>
<div style="left:32.50px;top:359.00px;width:191.80px;height:1.00px;background:repeating-linear-gradient(90deg,#727272 0 1px,transparent 1px 2px)"></div>
<div style="left:349.20px;top:359.00px;width:661.60px;height:1.00px;background:repeating-linear-gradient(90deg,#727272 0 1px,transparent 1px 2px)"></div>
<span class="t" style="left:34.21px;top:361.00px;font-size:9.5px;line-height:9.5px;font-weight:bold;color:#000;transform:scale(0.9325,1.000);">Total</span>
<span class="t" style="left:240.51px;top:361.00px;font-size:9.5px;line-height:9.5px;font-weight:bold;color:#000;transform:scale(0.8641,1.000);">USD</span>
<span class="t" style="left:372.04px;top:361.00px;font-size:9.5px;line-height:9.5px;font-weight:bold;color:#000;transform:scale(0.9455,1.000);">-1,000.00</span>
<span class="t" style="left:455.05px;top:361.00px;font-size:9.5px;line-height:9.5px;font-weight:bold;color:#000;transform:scale(0.9455,1.000);">0.00</span>
<span class="t" style="left:517.58px;top:361.00px;font-size:9.5px;line-height:9.5px;font-weight:bold;color:#000;transform:scale(0.9455,1.000);">0.00</span>
<span class="t" style="left:580.11px;top:361.00px;font-size:9.5px;line-height:9.5px;font-weight:bold;color:#000;transform:scale(0.9455,1.000);">0.00</span>
<span class="t" style="left:642.64px;top:361.00px;font-size:9.5px;line-height:9.5px;font-weight:bold;color:#000;transform:scale(0.9455,1.000);">0.00</span>
<span class="t" style="left:705.17px;top:361.00px;font-size:9.5px;line-height:9.5px;font-weight:bold;color:#000;transform:scale(0.9455,1.000);">0.00</span>
<span class="t" style="left:767.70px;top:361.00px;font-size:9.5px;line-height:9.5px;font-weight:bold;color:#000;transform:scale(0.9455,1.000);">0.00</span>
<span class="t" style="left:830.23px;top:361.00px;font-size:9.5px;line-height:9.5px;font-weight:bold;color:#000;transform:scale(0.9455,1.000);">0.00</span>
<span class="t" style="left:892.76px;top:361.00px;font-size:9.5px;line-height:9.5px;font-weight:bold;color:#000;transform:scale(0.9455,1.000);">0.00</span>
<span class="t" style="left:955.29px;top:361.00px;font-size:9.5px;line-height:9.5px;font-weight:bold;color:#000;transform:scale(0.9455,1.000);">0.00</span>
<div style="left:32.50px;top:371.00px;width:191.80px;height:2.00px;background:linear-gradient(#b0b0b0 0 50%,#a0a0a0 50% 100%)"></div>
<div style="left:349.20px;top:371.00px;width:661.60px;height:2.00px;background:linear-gradient(#b0b0b0 0 50%,#a0a0a0 50% 100%)"></div>
<span class="t" style="left:34.07px;top:400.00px;font-size:9.5px;line-height:9.5px;font-weight:bold;color:#000;transform:scale(0.8687,1.000);">Customer service and support expenses</span>
<div style="left:32.50px;top:410.00px;width:191.80px;height:1.00px;background:repeating-linear-gradient(90deg,#727272 0 1px,transparent 1px 2px)"></div>
<span class="t k" style="left:41.00px;top:412.00px;font-size:9.5px;line-height:9.5px;font-weight:normal;color:#262626;transform:scale(0.9340,1.000);">Amount per period</span>
<span class="t k" style="left:240.40px;top:412.00px;font-size:9.5px;line-height:9.5px;font-weight:normal;color:#262626;transform:scale(0.8463,1.000);">USD</span>
<span class="t k" style="left:373.11px;top:412.00px;font-size:9.5px;line-height:9.5px;font-weight:normal;color:#262626;transform:scale(0.9174,1.000);">-9,000.00</span>
<span class="t k" style="left:455.51px;top:412.00px;font-size:9.5px;line-height:9.5px;font-weight:normal;color:#262626;transform:scale(0.9174,1.000);">0.00</span>
<span class="t k" style="left:518.04px;top:412.00px;font-size:9.5px;line-height:9.5px;font-weight:normal;color:#262626;transform:scale(0.9174,1.000);">0.00</span>
<span class="t k" style="left:580.57px;top:412.00px;font-size:9.5px;line-height:9.5px;font-weight:normal;color:#262626;transform:scale(0.9174,1.000);">0.00</span>
<span class="t k" style="left:643.10px;top:412.00px;font-size:9.5px;line-height:9.5px;font-weight:normal;color:#262626;transform:scale(0.9174,1.000);">0.00</span>
<span class="t k" style="left:705.63px;top:412.00px;font-size:9.5px;line-height:9.5px;font-weight:normal;color:#262626;transform:scale(0.9174,1.000);">0.00</span>
<span class="t k" style="left:768.16px;top:412.00px;font-size:9.5px;line-height:9.5px;font-weight:normal;color:#262626;transform:scale(0.9174,1.000);">0.00</span>
<span class="t k" style="left:830.69px;top:412.00px;font-size:9.5px;line-height:9.5px;font-weight:normal;color:#262626;transform:scale(0.9174,1.000);">0.00</span>
<span class="t k" style="left:893.22px;top:412.00px;font-size:9.5px;line-height:9.5px;font-weight:normal;color:#262626;transform:scale(0.9174,1.000);">0.00</span>
<span class="t k" style="left:955.75px;top:412.00px;font-size:9.5px;line-height:9.5px;font-weight:normal;color:#262626;transform:scale(0.9174,1.000);">0.00</span>
<div style="left:32.50px;top:423.00px;width:191.80px;height:1.00px;background:repeating-linear-gradient(90deg,#727272 0 1px,transparent 1px 2px)"></div>
<div style="left:349.20px;top:423.00px;width:661.60px;height:1.00px;background:repeating-linear-gradient(90deg,#727272 0 1px,transparent 1px 2px)"></div>
<span class="t" style="left:34.21px;top:425.00px;font-size:9.5px;line-height:9.5px;font-weight:bold;color:#000;transform:scale(0.9325,1.000);">Total</span>
<span class="t" style="left:240.51px;top:425.00px;font-size:9.5px;line-height:9.5px;font-weight:bold;color:#000;transform:scale(0.8641,1.000);">USD</span>
<span class="t" style="left:372.04px;top:425.00px;font-size:9.5px;line-height:9.5px;font-weight:bold;color:#000;transform:scale(0.9455,1.000);">-9,000.00</span>
<span class="t" style="left:455.05px;top:425.00px;font-size:9.5px;line-height:9.5px;font-weight:bold;color:#000;transform:scale(0.9455,1.000);">0.00</span>
<span class="t" style="left:517.58px;top:425.00px;font-size:9.5px;line-height:9.5px;font-weight:bold;color:#000;transform:scale(0.9455,1.000);">0.00</span>
<span class="t" style="left:580.11px;top:425.00px;font-size:9.5px;line-height:9.5px;font-weight:bold;color:#000;transform:scale(0.9455,1.000);">0.00</span>
<span class="t" style="left:642.64px;top:425.00px;font-size:9.5px;line-height:9.5px;font-weight:bold;color:#000;transform:scale(0.9455,1.000);">0.00</span>
<span class="t" style="left:705.17px;top:425.00px;font-size:9.5px;line-height:9.5px;font-weight:bold;color:#000;transform:scale(0.9455,1.000);">0.00</span>
<span class="t" style="left:767.70px;top:425.00px;font-size:9.5px;line-height:9.5px;font-weight:bold;color:#000;transform:scale(0.9455,1.000);">0.00</span>
<span class="t" style="left:830.23px;top:425.00px;font-size:9.5px;line-height:9.5px;font-weight:bold;color:#000;transform:scale(0.9455,1.000);">0.00</span>
<span class="t" style="left:892.76px;top:425.00px;font-size:9.5px;line-height:9.5px;font-weight:bold;color:#000;transform:scale(0.9455,1.000);">0.00</span>
<span class="t" style="left:955.29px;top:425.00px;font-size:9.5px;line-height:9.5px;font-weight:bold;color:#000;transform:scale(0.9455,1.000);">0.00</span>
<div style="left:32.50px;top:435.00px;width:191.80px;height:2.00px;background:linear-gradient(#b0b0b0 0 50%,#a0a0a0 50% 100%)"></div>
<div style="left:349.20px;top:435.00px;width:661.60px;height:2.00px;background:linear-gradient(#b0b0b0 0 50%,#a0a0a0 50% 100%)"></div>
<span class="t" style="left:33.86px;top:464.00px;font-size:9.5px;line-height:9.5px;font-weight:bold;color:#000;transform:scale(0.8804,1.000);">Legal and regulatory compliance fees</span>
<div style="left:32.50px;top:474.00px;width:191.80px;height:1.00px;background:repeating-linear-gradient(90deg,#727272 0 1px,transparent 1px 2px)"></div>
<span class="t k" style="left:41.00px;top:476.00px;font-size:9.5px;line-height:9.5px;font-weight:normal;color:#262626;transform:scale(0.9340,1.000);">Amount per period</span>
<span class="t k" style="left:240.40px;top:476.00px;font-size:9.5px;line-height:9.5px;font-weight:normal;color:#262626;transform:scale(0.8463,1.000);">USD</span>
<span class="t k" style="left:368.93px;top:476.00px;font-size:9.5px;line-height:9.5px;font-weight:normal;color:#262626;transform:scale(0.9174,1.000);">-11,900.00</span>
<span class="t k" style="left:455.51px;top:476.00px;font-size:9.5px;line-height:9.5px;font-weight:normal;color:#262626;transform:scale(0.9174,1.000);">0.00</span>
<span class="t k" style="left:518.04px;top:476.00px;font-size:9.5px;line-height:9.5px;font-weight:normal;color:#262626;transform:scale(0.9174,1.000);">0.00</span>
<span class="t k" style="left:580.57px;top:476.00px;font-size:9.5px;line-height:9.5px;font-weight:normal;color:#262626;transform:scale(0.9174,1.000);">0.00</span>
<span class="t k" style="left:643.10px;top:476.00px;font-size:9.5px;line-height:9.5px;font-weight:normal;color:#262626;transform:scale(0.9174,1.000);">0.00</span>
<span class="t k" style="left:705.63px;top:476.00px;font-size:9.5px;line-height:9.5px;font-weight:normal;color:#262626;transform:scale(0.9174,1.000);">0.00</span>
<span class="t k" style="left:768.16px;top:476.00px;font-size:9.5px;line-height:9.5px;font-weight:normal;color:#262626;transform:scale(0.9174,1.000);">0.00</span>
<span class="t k" style="left:830.69px;top:476.00px;font-size:9.5px;line-height:9.5px;font-weight:normal;color:#262626;transform:scale(0.9174,1.000);">0.00</span>
<span class="t k" style="left:893.22px;top:476.00px;font-size:9.5px;line-height:9.5px;font-weight:normal;color:#262626;transform:scale(0.9174,1.000);">0.00</span>
<span class="t k" style="left:955.75px;top:476.00px;font-size:9.5px;line-height:9.5px;font-weight:normal;color:#262626;transform:scale(0.9174,1.000);">0.00</span>
<div style="left:32.50px;top:487.00px;width:191.80px;height:1.00px;background:repeating-linear-gradient(90deg,#727272 0 1px,transparent 1px 2px)"></div>
<div style="left:349.20px;top:487.00px;width:661.60px;height:1.00px;background:repeating-linear-gradient(90deg,#727272 0 1px,transparent 1px 2px)"></div>
<span class="t" style="left:34.21px;top:489.00px;font-size:9.5px;line-height:9.5px;font-weight:bold;color:#000;transform:scale(0.9325,1.000);">Total</span>
<span class="t" style="left:240.51px;top:489.00px;font-size:9.5px;line-height:9.5px;font-weight:bold;color:#000;transform:scale(0.8641,1.000);">USD</span>
<span class="t" style="left:367.55px;top:489.00px;font-size:9.5px;line-height:9.5px;font-weight:bold;color:#000;transform:scale(0.9455,1.000);">-11,900.00</span>
<span class="t" style="left:455.05px;top:489.00px;font-size:9.5px;line-height:9.5px;font-weight:bold;color:#000;transform:scale(0.9455,1.000);">0.00</span>
<span class="t" style="left:517.58px;top:489.00px;font-size:9.5px;line-height:9.5px;font-weight:bold;color:#000;transform:scale(0.9455,1.000);">0.00</span>
<span class="t" style="left:580.11px;top:489.00px;font-size:9.5px;line-height:9.5px;font-weight:bold;color:#000;transform:scale(0.9455,1.000);">0.00</span>
<span class="t" style="left:642.64px;top:489.00px;font-size:9.5px;line-height:9.5px;font-weight:bold;color:#000;transform:scale(0.9455,1.000);">0.00</span>
<span class="t" style="left:705.17px;top:489.00px;font-size:9.5px;line-height:9.5px;font-weight:bold;color:#000;transform:scale(0.9455,1.000);">0.00</span>
<span class="t" style="left:767.70px;top:489.00px;font-size:9.5px;line-height:9.5px;font-weight:bold;color:#000;transform:scale(0.9455,1.000);">0.00</span>
<span class="t" style="left:830.23px;top:489.00px;font-size:9.5px;line-height:9.5px;font-weight:bold;color:#000;transform:scale(0.9455,1.000);">0.00</span>
<span class="t" style="left:892.76px;top:489.00px;font-size:9.5px;line-height:9.5px;font-weight:bold;color:#000;transform:scale(0.9455,1.000);">0.00</span>
<span class="t" style="left:955.29px;top:489.00px;font-size:9.5px;line-height:9.5px;font-weight:bold;color:#000;transform:scale(0.9455,1.000);">0.00</span>
<div style="left:32.50px;top:499.00px;width:191.80px;height:2.00px;background:linear-gradient(#b0b0b0 0 50%,#a0a0a0 50% 100%)"></div>
<div style="left:349.20px;top:499.00px;width:661.60px;height:2.00px;background:linear-gradient(#b0b0b0 0 50%,#a0a0a0 50% 100%)"></div>
<span class="t" style="left:33.85px;top:528.00px;font-size:9.5px;line-height:9.5px;font-weight:bold;color:#000;transform:scale(0.8878,1.000);">Insurance premiums</span>
<div style="left:32.50px;top:538.00px;width:191.80px;height:1.00px;background:repeating-linear-gradient(90deg,#727272 0 1px,transparent 1px 2px)"></div>
<span class="t k" style="left:41.00px;top:540.00px;font-size:9.5px;line-height:9.5px;font-weight:normal;color:#262626;transform:scale(0.9340,1.000);">Amount per period</span>
<span class="t k" style="left:240.40px;top:540.00px;font-size:9.5px;line-height:9.5px;font-weight:normal;color:#262626;transform:scale(0.8463,1.000);">USD</span>
<span class="t k" style="left:373.11px;top:540.00px;font-size:9.5px;line-height:9.5px;font-weight:normal;color:#262626;transform:scale(0.9174,1.000);">-3,000.00</span>
<span class="t k" style="left:455.51px;top:540.00px;font-size:9.5px;line-height:9.5px;font-weight:normal;color:#262626;transform:scale(0.9174,1.000);">0.00</span>
<span class="t k" style="left:518.04px;top:540.00px;font-size:9.5px;line-height:9.5px;font-weight:normal;color:#262626;transform:scale(0.9174,1.000);">0.00</span>
<span class="t k" style="left:580.57px;top:540.00px;font-size:9.5px;line-height:9.5px;font-weight:normal;color:#262626;transform:scale(0.9174,1.000);">0.00</span>
<span class="t k" style="left:643.10px;top:540.00px;font-size:9.5px;line-height:9.5px;font-weight:normal;color:#262626;transform:scale(0.9174,1.000);">0.00</span>
<span class="t k" style="left:705.63px;top:540.00px;font-size:9.5px;line-height:9.5px;font-weight:normal;color:#262626;transform:scale(0.9174,1.000);">0.00</span>
<span class="t k" style="left:768.16px;top:540.00px;font-size:9.5px;line-height:9.5px;font-weight:normal;color:#262626;transform:scale(0.9174,1.000);">0.00</span>
<span class="t k" style="left:830.69px;top:540.00px;font-size:9.5px;line-height:9.5px;font-weight:normal;color:#262626;transform:scale(0.9174,1.000);">0.00</span>
<span class="t k" style="left:893.22px;top:540.00px;font-size:9.5px;line-height:9.5px;font-weight:normal;color:#262626;transform:scale(0.9174,1.000);">0.00</span>
<span class="t k" style="left:955.75px;top:540.00px;font-size:9.5px;line-height:9.5px;font-weight:normal;color:#262626;transform:scale(0.9174,1.000);">0.00</span>
<div style="left:32.50px;top:551.00px;width:191.80px;height:1.00px;background:repeating-linear-gradient(90deg,#727272 0 1px,transparent 1px 2px)"></div>
<div style="left:349.20px;top:551.00px;width:661.60px;height:1.00px;background:repeating-linear-gradient(90deg,#727272 0 1px,transparent 1px 2px)"></div>
<span class="t" style="left:34.21px;top:553.00px;font-size:9.5px;line-height:9.5px;font-weight:bold;color:#000;transform:scale(0.9325,1.000);">Total</span>
<span class="t" style="left:240.51px;top:553.00px;font-size:9.5px;line-height:9.5px;font-weight:bold;color:#000;transform:scale(0.8641,1.000);">USD</span>
<span class="t" style="left:372.04px;top:553.00px;font-size:9.5px;line-height:9.5px;font-weight:bold;color:#000;transform:scale(0.9455,1.000);">-3,000.00</span>
<span class="t" style="left:455.05px;top:553.00px;font-size:9.5px;line-height:9.5px;font-weight:bold;color:#000;transform:scale(0.9455,1.000);">0.00</span>
<span class="t" style="left:517.58px;top:553.00px;font-size:9.5px;line-height:9.5px;font-weight:bold;color:#000;transform:scale(0.9455,1.000);">0.00</span>
<span class="t" style="left:580.11px;top:553.00px;font-size:9.5px;line-height:9.5px;font-weight:bold;color:#000;transform:scale(0.9455,1.000);">0.00</span>
<span class="t" style="left:642.64px;top:553.00px;font-size:9.5px;line-height:9.5px;font-weight:bold;color:#000;transform:scale(0.9455,1.000);">0.00</span>
<span class="t" style="left:705.17px;top:553.00px;font-size:9.5px;line-height:9.5px;font-weight:bold;color:#000;transform:scale(0.9455,1.000);">0.00</span>
<span class="t" style="left:767.70px;top:553.00px;font-size:9.5px;line-height:9.5px;font-weight:bold;color:#000;transform:scale(0.9455,1.000);">0.00</span>
<span class="t" style="left:830.23px;top:553.00px;font-size:9.5px;line-height:9.5px;font-weight:bold;color:#000;transform:scale(0.9455,1.000);">0.00</span>
<span class="t" style="left:892.76px;top:553.00px;font-size:9.5px;line-height:9.5px;font-weight:bold;color:#000;transform:scale(0.9455,1.000);">0.00</span>
<span class="t" style="left:955.29px;top:553.00px;font-size:9.5px;line-height:9.5px;font-weight:bold;color:#000;transform:scale(0.9455,1.000);">0.00</span>
<div style="left:32.50px;top:563.00px;width:191.80px;height:2.00px;background:linear-gradient(#b0b0b0 0 50%,#a0a0a0 50% 100%)"></div>
<div style="left:349.20px;top:563.00px;width:661.60px;height:2.00px;background:linear-gradient(#b0b0b0 0 50%,#a0a0a0 50% 100%)"></div>
<div style="left:1010.80px;top:52.00px;width:13.20px;height:521.00px;background:#e9ebee"></div>
<div style="left:1011.80px;top:53.00px;width:11.50px;height:520.00px;background:#f6f6f6;border-radius:5px"></div>
<svg style="left:1014px;top:55px" width="8" height="6" viewBox="0 0 8 6"><path d="M0.9 4.6 L3.9 0.9 L6.9 4.6 Z" fill="#6e6e6e"/></svg>
<div style="left:1014.90px;top:63.10px;width:5.90px;height:221.90px;background:#6e6e6e;border-radius:3px"></div>
<svg style="left:1014px;top:565px" width="8" height="6" viewBox="0 0 8 6"><path d="M0.9 1 L3.9 4.8 L6.9 1 Z" fill="#6e6e6e"/></svg>
<div style="left:0.00px;top:572.20px;width:1024.00px;height:21.80px;background:#e6e9ed"></div>
<svg style="left:14px;top:577px" width="10" height="12" viewBox="0 0 10 12" fill="none" stroke="#8a8a8a" stroke-width="0.9"><path d="M6.6 2.2 L3 5.5 L6.6 8.8"/></svg>
<svg style="left:36px;top:577px" width="10" height="12" viewBox="0 0 10 12" fill="none" stroke="#444" stroke-width="0.9"><path d="M2.4 2.2 L6 5.5 L2.4 8.8"/></svg>
<div style="left:75.50px;top:575.30px;width:42.50px;height:15.30px;background:#ffffff;border-radius:3px"></div>
<span class="t" style="left:79.81px;top:579.00px;font-size:10px;line-height:10px;font-weight:normal;color:#292929;transform:scale(0.9922,1.000);">How To</span>
<div style="left:124.70px;top:575.30px;width:60.80px;height:15.30px;background:#fcf69f;border-radius:3px"></div>
<span class="t" style="left:129.94px;top:579.00px;font-size:10px;line-height:10px;font-weight:normal;color:#292929;transform:scale(0.9555,1.000);">Main Inputs</span>
<div style="left:187.50px;top:577.00px;width:1.00px;height:12.00px;background:#c9ccd1"></div>
<div style="left:191.90px;top:575.30px;width:76.30px;height:15.30px;background:#fcf69f;border-radius:3px"></div>
<span class="t" style="left:197.29px;top:579.00px;font-size:10px;line-height:10px;font-weight:normal;color:#292929;transform:scale(0.9186,1.000);">Sub Quick View</span>
<div style="left:270.90px;top:577.00px;width:1.00px;height:12.00px;background:#c9ccd1"></div>
<span class="t" style="left:279.69px;top:579.00px;font-size:10px;line-height:10px;font-weight:normal;color:#292929;transform:scale(0.8877,1.000);">Revenue</span>
<div style="left:323.90px;top:577.00px;width:1.00px;height:12.00px;background:#c9ccd1"></div>
<div style="left:327.00px;top:572.20px;width:55.50px;height:18.10px;background:#fff;border-radius:0 0 4px 4px"></div>
<span class="t" style="left:332.05px;top:577.00px;font-size:10px;line-height:10px;font-weight:normal;color:#1e1e1e;transform:scale(0.8999,1.000);-webkit-text-stroke:0.3px #1e1e1e">General Ex</span>
<div style="left:332.50px;top:588.00px;width:44.50px;height:1.60px;background:#5aa37a;border-radius:1px"></div>
<div style="left:384.80px;top:577.00px;width:1.00px;height:12.00px;background:#c9ccd1"></div>
<span class="t" style="left:394.95px;top:579.00px;font-size:10px;line-height:10px;font-weight:normal;color:#292929;transform:scale(0.9412,1.000);">Working Capital</span>
<div style="left:470.30px;top:577.00px;width:1.00px;height:12.00px;background:#c9ccd1"></div>
<span class="t" style="left:478.57px;top:579.00px;font-size:10px;line-height:10px;font-weight:normal;color:#292929;transform:scale(0.8503,1.000);">CapEx</span>
<div style="left:512.00px;top:577.00px;width:1.00px;height:12.00px;background:#c9ccd1"></div>
<span class="t" style="left:520.83px;top:579.00px;font-size:10px;line-height:10px;font-weight:normal;color:#292929;transform:scale(0.9568,1.000);">Funding</span>
<div style="left:563.10px;top:577.00px;width:1.00px;height:12.00px;background:#c9ccd1"></div>
<span class="t" style="left:572.96px;top:579.00px;font-size:10px;line-height:10px;font-weight:normal;color:#292929;transform:scale(0.9327,1.000);">Income Statement</span>
<div style="left:658.30px;top:577.00px;width:1.00px;height:12.00px;background:#c9ccd1"></div>
<span class="t" style="left:666.56px;top:579.00px;font-size:10px;line-height:10px;font-weight:normal;color:#292929;transform:scale(0.8856,1.000);">Cash Flow</span>
<div style="left:717.50px;top:577.00px;width:1.00px;height:12.00px;background:#c9ccd1"></div>
<span class="t" style="left:726.19px;top:579.00px;font-size:10px;line-height:10px;font-weight:normal;color:#292929;transform:scale(0.8870,1.000);">Balance Sheet</span>
<div style="left:793.10px;top:577.00px;width:1.00px;height:12.00px;background:#c9ccd1"></div>
<div style="left:796.5px;top:575.3px;width:46.4px;height:15.3px;background:#fcf69f;border-radius:3px 0 0 3px;overflow:hidden">
<span class="t" style="left:5.41px;top:3.70px;font-size:10px;line-height:10px;color:#292929;transform:scaleX(0.8741)">Salary Assumptions</span></div>
<div style="left:849.30px;top:581.30px;width:1.60px;height:1.60px;background:#333;border-radius:50%"></div>
<div style="left:852.10px;top:581.30px;width:1.60px;height:1.60px;background:#333;border-radius:50%"></div>
<div style="left:854.90px;top:581.30px;width:1.60px;height:1.60px;background:#333;border-radius:50%"></div>
<div style="left:869.50px;top:581.70px;width:8.50px;height:1.00px;background:#333"></div>
<div style="left:873.25px;top:577.50px;width:1.00px;height:9.40px;background:#333"></div>
<div style="left:894.40px;top:578.80px;width:1.50px;height:1.50px;background:#555;border-radius:50%"></div>
<div style="left:894.40px;top:582.00px;width:1.50px;height:1.50px;background:#555;border-radius:50%"></div>
<div style="left:894.40px;top:585.20px;width:1.50px;height:1.50px;background:#555;border-radius:50%"></div>
<div style="left:907.00px;top:577.40px;width:104.50px;height:10.80px;background:#f5f6f8;border-radius:5.4px"></div>
<svg style="left:909px;top:579px" width="7" height="8" viewBox="0 0 7 8"><path d="M5.4 0.8 V6.8 L1 3.8 Z" fill="#6e6e6e"/></svg>
<div style="left:917.70px;top:580.00px;width:42.80px;height:5.60px;background:#6e6e6e;border-radius:3px"></div>
<svg style="left:1003px;top:579px" width="7" height="8" viewBox="0 0 7 8"><path d="M1.2 0.8 V6.8 L5.8 3.8 Z" fill="#6e6e6e"/></svg>
<div style="left:0.00px;top:593.50px;width:1024.00px;height:12.50px;background:#f3f3f3"></div>
<span class="t" style="left:7.37px;top:598.00px;font-size:8px;line-height:8px;font-weight:normal;color:#3a3a3a;transform:scale(0.8319,1.000);">Ready</span>
<svg style="left:39px;top:596px" width="12" height="10" viewBox="0 0 12 10" fill="none" stroke="#555" stroke-width="1.1">
<path d="M4.6 9 H1.6 V1.4 H10.3 V3.8"/><circle cx="7.4" cy="6.2" r="2.5" stroke-width="1"/><circle cx="7.4" cy="6.2" r="1" fill="#333" stroke="none"/>
</svg>
<svg style="left:60px;top:595.5px" width="12" height="11" viewBox="0 0 12 11" fill="none" stroke="#444" stroke-width="1">
<circle cx="5.6" cy="1.7" r="1.1" fill="#444" stroke="none"/><path d="M1 3.6 Q5.6 4.8 10.2 3.6"/><path d="M5.6 4.3 V6.6 L3.6 10.6"/><path d="M6.9 7 L10.6 10.6 M10.6 7 L6.9 10.6"/>
</svg>
<span class="t" style="left:73.23px;top:598.00px;font-size:8px;line-height:8px;font-weight:bold;color:#333;transform:scale(0.8474,1.000);">Accessibility: Investigate</span>
<div style="left:826.00px;top:593.60px;width:25.90px;height:12.40px;background:#e3e3e3"></div>
<svg style="left:833px;top:595px" width="12" height="11" viewBox="0 0 12 11" fill="none" stroke="#444" stroke-width="0.9">
<rect x="1.3" y="1.3" width="9.4" height="8.6"/><path d="M1.3 4.2 H10.7 M1.3 7 H10.7 M4.4 1.3 V9.9 M7.6 1.3 V9.9"/>
</svg>
<svg style="left:860px;top:595px" width="12" height="11" viewBox="0 0 12 11" fill="none" stroke="#555" stroke-width="0.9">
<rect x="1.3" y="1.3" width="9.4" height="8.6"/><rect x="3.6" y="3.2" width="4.8" height="4.8"/>
</svg>
<svg style="left:887px;top:595px" width="12" height="11" viewBox="0 0 12 11" fill="none" stroke="#555" stroke-width="0.9">
<path d="M1.3 1 V9.9 H10.7 V1 M1.3 6.5 H6.2 V1"/>
</svg>
<div style="left:910.00px;top:600.80px;width:4.60px;height:0.90px;background:#666"></div>
<div style="left:918.60px;top:600.80px;width:66.40px;height:0.80px;background:#888"></div>
<div style="left:950.50px;top:595.80px;width:3.40px;height:9.20px;background:#555;border-radius:1px"></div>
<div style="left:988.30px;top:600.80px;width:5.00px;height:0.90px;background:#666"></div>
<div style="left:990.35px;top:598.80px;width:0.90px;height:5.00px;background:#666"></div>
<span class="t" style="left:1001.78px;top:598.00px;font-size:8px;line-height:8px;font-weight:normal;color:#3a3a3a;transform:scale(0.8622,1.000);">100%</span>
</body></html>
